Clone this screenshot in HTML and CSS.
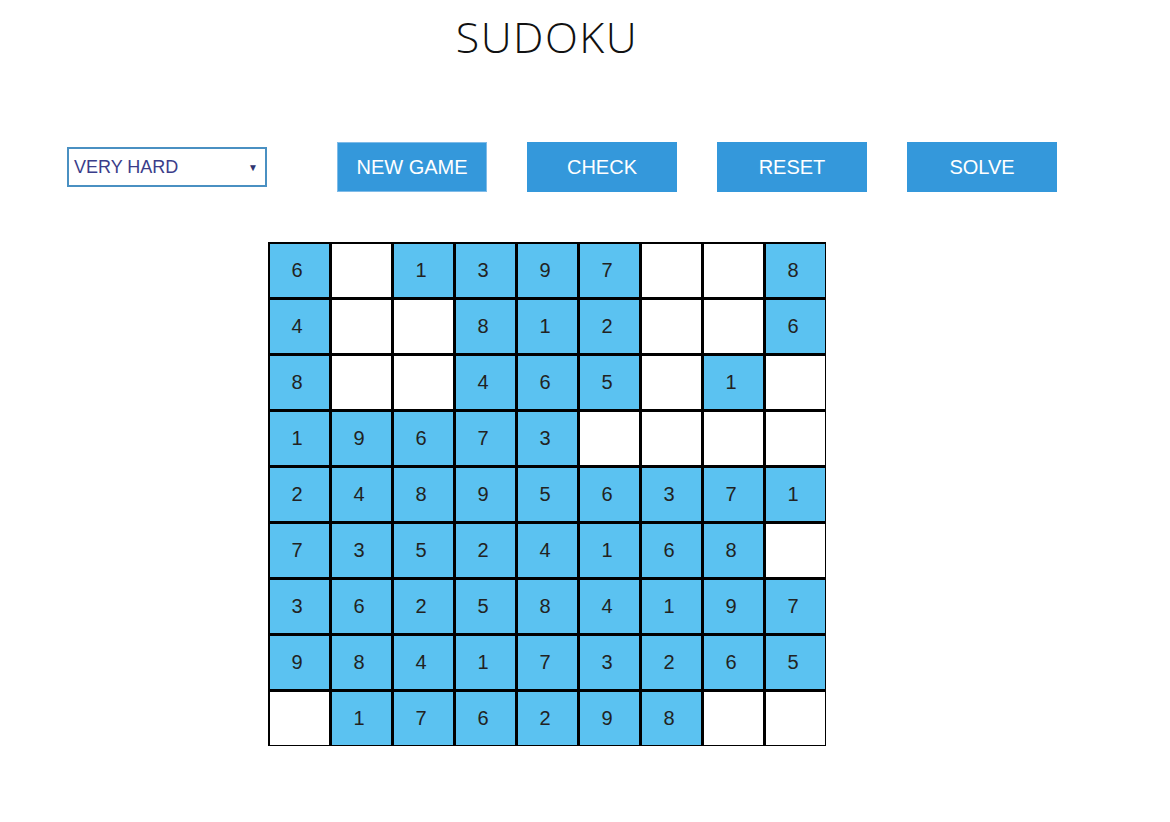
FILE: index.html
```html
<!DOCTYPE html>
<html>
<head>
<meta charset="utf-8">
<title>Sudoku</title>
<link rel="stylesheet" href="styles.css">
</head>
<body>
<div class="page">
  <h1 class="title">SUDOKU</h1>
  <div class="controls">
    <div class="select"><span>VERY HARD</span><span class="arrow">▼</span></div>
    <div class="buttons">
      <button class="btn btn-focus">NEW GAME</button>
      <button class="btn">CHECK</button>
      <button class="btn">RESET</button>
      <button class="btn">SOLVE</button>
    </div>
  </div>
  <div class="board">
    <div class="cell f">6</div><div class="cell"></div><div class="cell f">1</div><div class="cell f">3</div><div class="cell f">9</div><div class="cell f">7</div><div class="cell"></div><div class="cell"></div><div class="cell f">8</div>
    <div class="cell f">4</div><div class="cell"></div><div class="cell"></div><div class="cell f">8</div><div class="cell f">1</div><div class="cell f">2</div><div class="cell"></div><div class="cell"></div><div class="cell f">6</div>
    <div class="cell f">8</div><div class="cell"></div><div class="cell"></div><div class="cell f">4</div><div class="cell f">6</div><div class="cell f">5</div><div class="cell"></div><div class="cell f">1</div><div class="cell"></div>
    <div class="cell f">1</div><div class="cell f">9</div><div class="cell f">6</div><div class="cell f">7</div><div class="cell f">3</div><div class="cell"></div><div class="cell"></div><div class="cell"></div><div class="cell"></div>
    <div class="cell f">2</div><div class="cell f">4</div><div class="cell f">8</div><div class="cell f">9</div><div class="cell f">5</div><div class="cell f">6</div><div class="cell f">3</div><div class="cell f">7</div><div class="cell f">1</div>
    <div class="cell f">7</div><div class="cell f">3</div><div class="cell f">5</div><div class="cell f">2</div><div class="cell f">4</div><div class="cell f">1</div><div class="cell f">6</div><div class="cell f">8</div><div class="cell"></div>
    <div class="cell f">3</div><div class="cell f">6</div><div class="cell f">2</div><div class="cell f">5</div><div class="cell f">8</div><div class="cell f">4</div><div class="cell f">1</div><div class="cell f">9</div><div class="cell f">7</div>
    <div class="cell f">9</div><div class="cell f">8</div><div class="cell f">4</div><div class="cell f">1</div><div class="cell f">7</div><div class="cell f">3</div><div class="cell f">2</div><div class="cell f">6</div><div class="cell f">5</div>
    <div class="cell"></div><div class="cell f">1</div><div class="cell f">7</div><div class="cell f">6</div><div class="cell f">2</div><div class="cell f">9</div><div class="cell f">8</div><div class="cell"></div><div class="cell"></div>
  </div>
</div>
</body>
</html>
```
FILE: styles.css
```css
html, body {
  margin: 0;
  padding: 0;
  background: #fff;
}
.page {
  width: 1094px;
  display: flex;
  flex-direction: column;
  align-items: center;
  font-family: "Liberation Sans", Arial, sans-serif;
}
.title {
  margin: 15px 0 0 0;
  font-family: "Open Sans", sans-serif;
  font-weight: 300;
  font-size: 43px;
  line-height: 43px;
  letter-spacing: 1.5px;
  color: #111;
}
.controls {
  align-self: stretch;
  margin-top: 84px;
  padding-left: 67px;
  display: flex;
  align-items: center;
  height: 50px;
}
.select {
  box-sizing: border-box;
  width: 200px;
  height: 40px;
  border: 2px solid #4a90c2;
  display: flex;
  align-items: center;
  justify-content: space-between;
  padding: 0 7px 0 5px;
  font-size: 18px;
  color: #3a3d8a;
}
.arrow {
  font-size: 10px;
  color: #2f3470;
}
.buttons {
  display: flex;
  gap: 40px;
  margin-left: 70px;
}
.btn {
  box-sizing: border-box;
  width: 150px;
  height: 50px;
  border: none;
  background: #3498db;
  color: #fff;
  font-family: "Liberation Sans", Arial, sans-serif;
  font-size: 20px;
  padding: 0;
}
.btn-focus {
  border: 1px solid #7fbbe8;
}
.board {
  margin-top: 50px;
  display: grid;
  grid-template-columns: repeat(9, 59px);
  grid-template-rows: repeat(9, 53px);
  gap: 3px;
  background: #000;
  border-style: solid;
  border-color: #000;
  border-width: 2px 1px 1px 2px;
}
.cell {
  background: #fff;
  display: flex;
  align-items: center;
  justify-content: center;
  padding-right: 5px;
  box-sizing: border-box;
  font-size: 20px;
  color: #222;
}
.cell.f {
  background: #5bc2f1;
}
```
